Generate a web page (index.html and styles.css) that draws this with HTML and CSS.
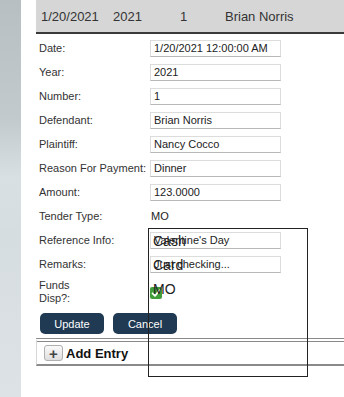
FILE: index.html
```html
<!DOCTYPE html>
<html lang="en">
<head>
    <meta charset="UTF-8">
    <meta name="viewport" content="width=device-width, initial-scale=1.0">
    <title>Payment Entry</title>
    <link rel="stylesheet" href="styles.css">
</head>
<body>
    <div class="page">
        <div class="side"></div>
        <div class="main">
            <div class="summary">
                <span class="col-date">1/20/2021</span>
                <span class="col-year">2021</span>
                <span class="col-num">1</span>
                <span class="col-name">Brian Norris</span>
            </div>

            <div class="form">
                <div class="row">
                    <label>Date:</label>
                    <input type="text" value="1/20/2021 12:00:00 AM">
                </div>
                <div class="row">
                    <label>Year:</label>
                    <input type="text" value="2021">
                </div>
                <div class="row">
                    <label>Number:</label>
                    <input type="text" value="1">
                </div>
                <div class="row">
                    <label>Defendant:</label>
                    <input type="text" value="Brian Norris">
                </div>
                <div class="row">
                    <label>Plaintiff:</label>
                    <input type="text" value="Nancy Cocco">
                </div>
                <div class="row">
                    <label>Reason For Payment:</label>
                    <input type="text" value="Dinner">
                </div>
                <div class="row">
                    <label>Amount:</label>
                    <input type="text" value="123.0000">
                </div>
                <div class="row">
                    <label>Tender Type:</label>
                    <span class="value">MO</span>
                </div>
                <div class="row">
                    <label>Reference Info:</label>
                    <input type="text" value="Valentine's Day">
                </div>
                <div class="row">
                    <label>Remarks:</label>
                    <input type="text" value="Just checking...">
                </div>
                <div class="row row-tall">
                    <label>Funds<br>Disp?:</label>
                    <span class="check">
                        <svg width="12" height="12" viewBox="0 0 12 12">
                            <path d="M2.5 6.3 L5 8.8 L9.8 3.2" fill="none" stroke="#fff" stroke-width="1.8" stroke-linecap="round" stroke-linejoin="round"/>
                        </svg>
                    </span>
                </div>

                <div class="actions">
                    <button class="btn">Update</button>
                    <button class="btn">Cancel</button>
                </div>

                <div class="tender-list">
                    <div class="option">Cash</div>
                    <div class="option">Card</div>
                    <div class="option">MO</div>
                </div>
            </div>

            <div class="add-row">
                <span class="plus">+</span>
                <span class="add-label">Add Entry</span>
            </div>
        </div>
    </div>
</body>
</html>
```

FILE: styles.css
```css
* {
    margin: 0;
    padding: 0;
    box-sizing: border-box;
}

body {
    font-family: 'Liberation Sans', Arial, sans-serif;
    color: #333;
    background: #fff;
}

.page {
    display: flex;
    height: 397px;
    overflow: hidden;
}

.side {
    width: 21px;
    flex-shrink: 0;
    background: linear-gradient(#b8bfc2 0%, #c3cacd 30%, #d9e0e3 45%, #d6dde0 60%, #dde2e6 100%);
}

.main {
    flex: 1;
    padding-left: 15px;
}

.summary {
    display: flex;
    align-items: center;
    height: 34px;
    padding-left: 5px;
    background: #d6d6d6;
    border-bottom: 2px solid #3a3a3a;
    font-size: 13px;
    color: #333;
}

.col-date { width: 72px; }
.col-year { width: 67px; }
.col-num { width: 45px; }

.form {
    position: relative;
    padding: 2px 0 0 3px;
}

.row {
    display: flex;
    align-items: center;
    height: 24px;
    font-size: 11px;
}

.row label {
    width: 111px;
    flex-shrink: 0;
    color: #333;
}

.row input {
    width: 131px;
    height: 17px;
    padding: 0 3px;
    font-family: inherit;
    font-size: 11px;
    color: #222;
    border: 1px solid #dcdcdc;
    border-bottom-color: #b8b8b8;
    background: #fff;
    outline: none;
}

.value {
    padding-left: 1px;
    color: #222;
}

.row-tall {
    height: 29px;
    align-items: flex-start;
    padding-top: 3px;
    line-height: 13px;
}

.check {
    display: flex;
    align-items: center;
    justify-content: center;
    width: 12px;
    height: 12px;
    margin-top: 8px;
    border-radius: 2px;
    background: #3f9e3a;
}

.actions {
    display: flex;
    gap: 9px;
    margin-top: 8px;
    padding-left: 1px;
}

.btn {
    width: 64px;
    height: 21px;
    border: none;
    border-radius: 5px;
    background: #1f3a52;
    color: #fff;
    font-family: inherit;
    font-size: 11px;
}

.tender-list {
    position: absolute;
    left: 112px;
    top: 194px;
    width: 160px;
    height: 149px;
    border: 1px solid #222;
    z-index: 2;
}

.option {
    height: 24px;
    line-height: 24px;
    padding-left: 4px;
    font-size: 14px;
    color: #222;
}

.add-row {
    display: flex;
    align-items: center;
    gap: 3px;
    margin-top: 4px;
    height: 28px;
    padding-left: 7px;
    border-top: 4px double #8a8a8a;
    border-left: 1px solid #d8d8d8;
    border-bottom: 2px solid #8a8a8a;
}

.plus {
    display: flex;
    align-items: center;
    justify-content: center;
    width: 19px;
    height: 16px;
    border: 1px solid #b0b0b0;
    border-radius: 3px;
    background: linear-gradient(#fafafa, #dedede);
    font-size: 15px;
    font-weight: bold;
    color: #444;
    line-height: 1;
}

.add-label {
    font-size: 13px;
    font-weight: bold;
    color: #111;
}
```
